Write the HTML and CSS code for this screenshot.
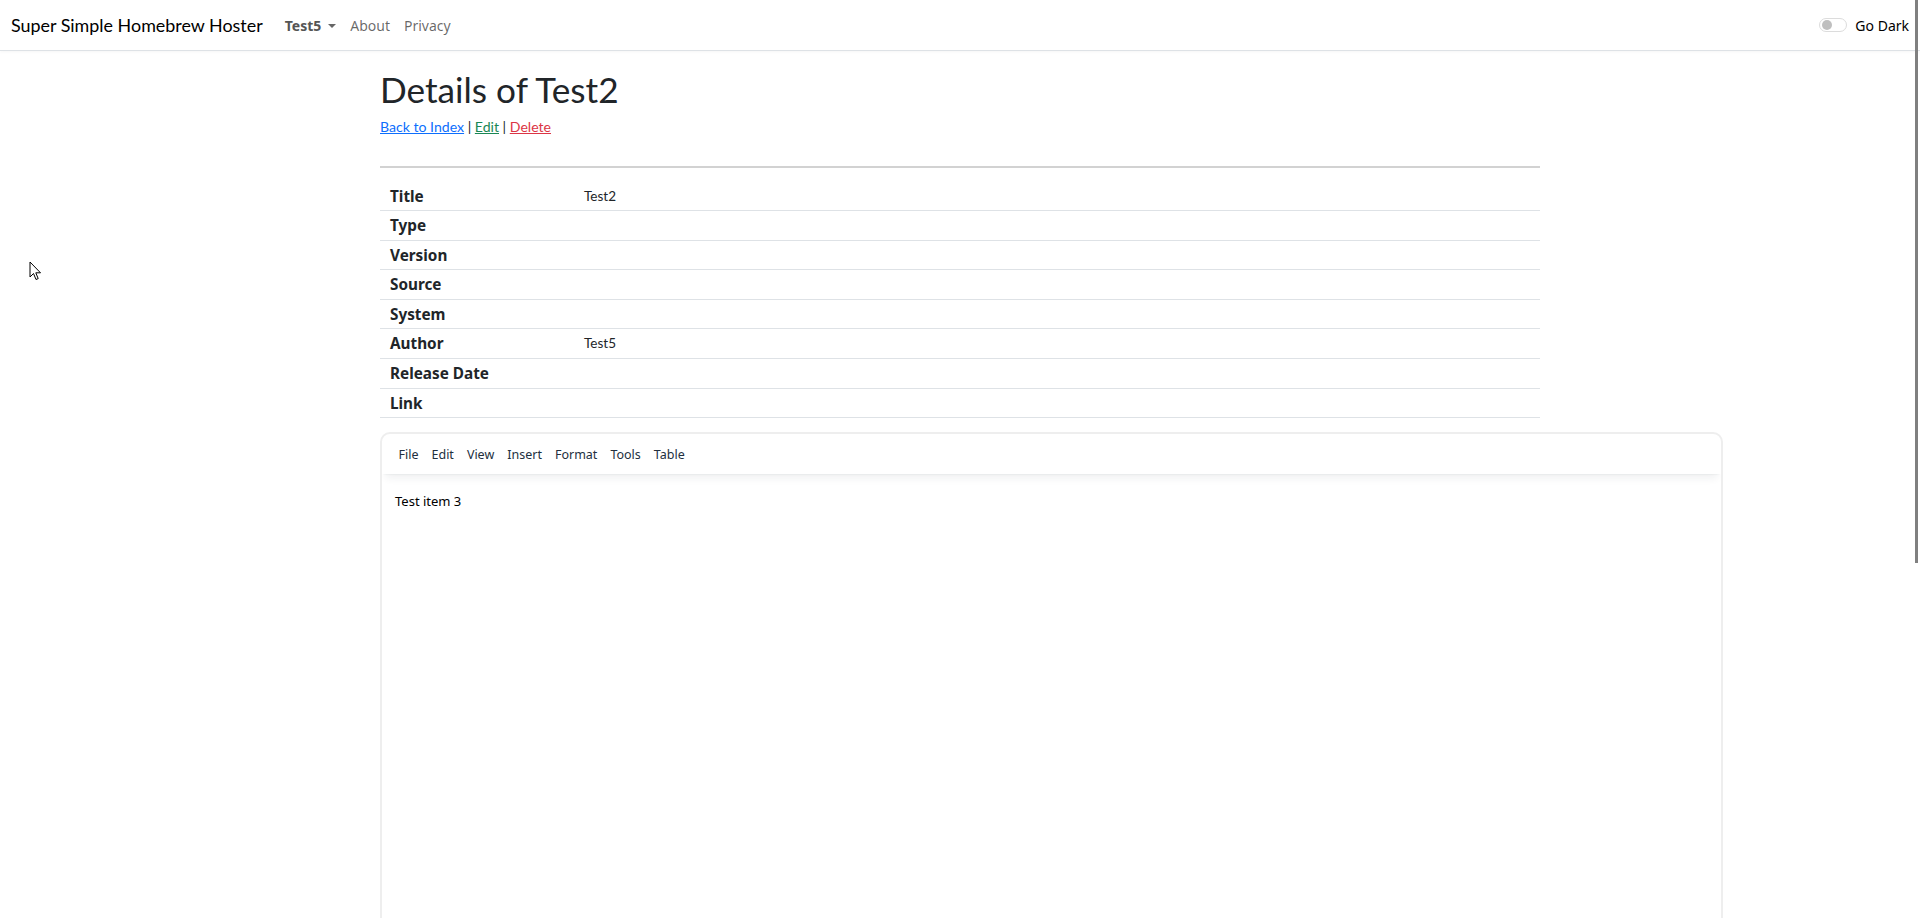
FILE: index.html
```html
<!DOCTYPE html>
<html lang="en">
<head>
<meta charset="utf-8">
<title>Details - Super Simple Homebrew Hoster</title>
<link rel="stylesheet" href="styles.css">
</head>
<body>
<header class="navbar">
  <a class="brand" href="#">Super Simple Homebrew Hoster</a>
  <nav class="nav">
    <a class="nav-link user" href="#">Test5<span class="caret"></span></a>
    <a class="nav-link" href="#">About</a>
    <a class="nav-link" href="#">Privacy</a>
  </nav>
  <label class="switch">
    <span class="switch-track"><span class="switch-knob"></span></span>
    <span class="switch-label">Go Dark</span>
  </label>
</header>

<main class="container">
  <h1 class="title">Details of Test2</h1>
  <div class="actions">
    <a class="link-blue" href="#">Back to Index</a> | <a class="link-green" href="#">Edit</a> | <a class="link-red" href="#">Delete</a>
  </div>
  <hr class="rule">
  <table class="details">
    <tbody>
      <tr><th>Title</th><td>Test2</td></tr>
      <tr><th>Type</th><td></td></tr>
      <tr><th>Version</th><td></td></tr>
      <tr><th>Source</th><td></td></tr>
      <tr><th>System</th><td></td></tr>
      <tr><th>Author</th><td>Test5</td></tr>
      <tr><th>Release Date</th><td></td></tr>
      <tr><th>Link</th><td></td></tr>
    </tbody>
  </table>

  <div class="editor">
    <div class="menubar">
      <span class="menu-item">File</span>
      <span class="menu-item">Edit</span>
      <span class="menu-item">View</span>
      <span class="menu-item">Insert</span>
      <span class="menu-item">Format</span>
      <span class="menu-item">Tools</span>
      <span class="menu-item">Table</span>
    </div>
    <div class="editor-body">
      <p>Test item 3</p>
    </div>
  </div>
</main>

<div class="scroll-thumb"></div>
<svg class="cursor" width="13" height="20" viewBox="0 0 13 20">
  <path d="M1 1 L1 16 L4.5 12.5 L7 18.5 L9.2 17.6 L6.8 11.8 L11.5 11.8 Z" fill="#fff" stroke="#000" stroke-width="1" stroke-linejoin="miter"/>
</svg>
</body>
</html>
```

FILE: styles.css
```css
html {
  overflow: hidden;
}
body {
  margin: 0;
  font-family: "Noto Sans", "Open Sans", sans-serif;
  font-size: 14px;
  line-height: 1.5;
  color: #212529;
  background: #fff;
}
a {
  text-decoration: none;
}

.navbar {
  height: 50px;
  border-bottom: 1px solid #dee2e6;
  display: flex;
  align-items: center;
  padding: 0 11px;
  box-shadow: 0 1px 3px rgba(0,0,0,0.04);
}
.brand {
  font-family: Lato, "Noto Sans", sans-serif;
  font-size: 17.9px;
  color: #000;
  margin-right: 22px;
  margin-top: 1px;
}
.nav {
  display: flex;
  align-items: center;
  flex: 1;
}
.nav-link {
  font-size: 14px;
  color: rgba(0,0,0,0.6);
  padding: 0 7px;
  margin-top: 1px;
}
.nav-link.user {
  font-weight: 700;
  color: #555;
  padding-left: 0;
  margin-right: 0;
}
.caret {
  display: inline-block;
  margin-left: 7px;
  vertical-align: 3px;
  border-top: 4px solid #666;
  border-left: 4px solid transparent;
  border-right: 4px solid transparent;
}
.switch {
  display: flex;
  align-items: center;
  gap: 8px;
}
.switch-track {
  width: 28px;
  height: 14px;
  border: 1px solid #dcdcdc;
  border-radius: 8px;
  display: flex;
  align-items: center;
  padding-left: 2px;
  box-sizing: border-box;
}
.switch-knob {
  width: 10px;
  height: 10px;
  border-radius: 50%;
  background: #bfbfbf;
}
.switch-label {
  color: #000;
  font-size: 14px;
}

.container {
  width: 1160px;
  margin: 0 auto;
}
.title {
  font-family: Lato, "Noto Sans", sans-serif;
  font-size: 35.2px;
  font-weight: 400;
  line-height: 1.2;
  margin: 17px 0 6px;
  color: #212529;
}
.actions {
  font-family: Lato, "Noto Sans", sans-serif;
  font-size: 14.1px;
}
.link-blue { color: #0d6efd; text-decoration: underline; }
.link-green { color: #198754; text-decoration: underline; }
.link-red { color: #dc3545; text-decoration: underline; }

.rule {
  margin: 29px 0 13px;
  border: 0;
  border-top: 2px solid #d2d2d2;
}

.details {
  width: 100%;
  border-collapse: collapse;
}
.details th,
.details td {
  padding: 4px 9px;
  text-align: left;
  border-bottom: 1px solid #dee2e6;
  line-height: 20.6px;
}
.details tr:first-child th,
.details tr:first-child td {
  padding-top: 5px;
  padding-bottom: 3px;
}
.details th {
  width: 175px;
  font-weight: 700;
  font-size: 15.3px;
  padding-left: 10px;
}
.details td {
  font-family: Lato, "Noto Sans", sans-serif;
  font-size: 13.5px;
  padding-left: 10px;
}

.editor {
  width: 1343px;
  height: 520px;
  margin-top: 14px;
  border: 2px solid #eee;
  border-radius: 10px;
  box-sizing: border-box;
  overflow: hidden;
}
.menubar {
  height: 40px;
  display: flex;
  align-items: center;
  padding: 0 10px;
  box-shadow: 0 2px 2px -2px rgba(34,47,62,.1), 0 8px 8px -4px rgba(34,47,62,.07);
  position: relative;
}
.menu-item {
  font-size: 12.5px;
  color: #222f3e;
  padding: 0 6.5px;
  margin-top: 3px;
}
.editor-body {
  padding: 18px 13px;
}
.editor-body p {
  margin: 0;
  font-size: 13px;
  color: #000;
}

.scroll-thumb {
  position: fixed;
  top: 0;
  right: 2px;
  width: 3px;
  height: 563px;
  background: #808080;
}
.cursor {
  position: absolute;
  left: 29px;
  top: 261px;
}
```
